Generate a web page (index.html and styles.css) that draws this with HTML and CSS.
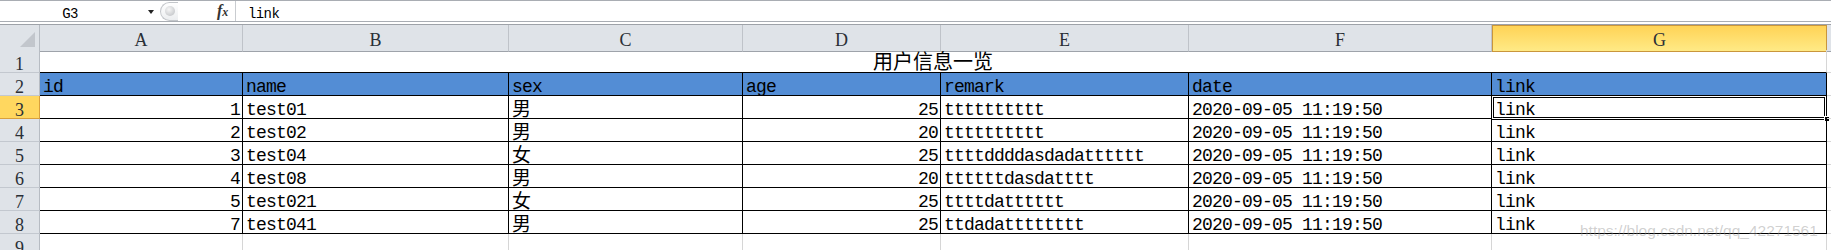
FILE: index.html
```html
<!DOCTYPE html>
<html lang="zh-CN">
<head>
<meta charset="utf-8">
<title>用户信息一览</title>
<link rel="stylesheet" href="styles.css">
</head>
<body>
<div class="app">
  <div class="fbar">
    <div class="namebox"><span class="ref">G3</span><span class="caret"></span></div>
    <div class="splitter"><span class="knob"></span></div>
    <div class="fx"><i class="f">f</i><i class="x">x</i></div>
    <div class="formula">link</div>
  </div>
  <div class="gap"></div>
  <div class="sheet">
    <div class="row hdr">
      <div class="corner"><svg width="40" height="24" viewBox="0 0 40 24"><polygon points="35,7 35,22 20,22" fill="#c2c6cc"/></svg></div>
      <div class="ch">A</div><div class="ch">B</div><div class="ch">C</div><div class="ch">D</div><div class="ch">E</div><div class="ch">F</div><div class="ch active">G</div><div class="ch filler"></div>
    </div>
    <div class="row">
      <div class="rh">1</div>
      <div class="c title"><span class="cjk">用户信息一览</span></div>
      <div class="c fill"></div>
    </div>
    <div class="row">
      <div class="rh">2</div>
      <div class="c t blue">id</div><div class="c t blue">name</div><div class="c t blue">sex</div><div class="c t blue">age</div><div class="c t blue">remark</div><div class="c t blue">date</div><div class="c t blue">link</div>
      <div class="c fill"></div>
    </div>
    <div class="row">
      <div class="rh active">3</div>
      <div class="c t num">1</div><div class="c t">test01</div><div class="c t"><span class="cjk">男</span></div><div class="c t num">25</div><div class="c t">tttttttttt</div><div class="c t">2020-09-05 11:19:50</div><div class="c t selcell">link<span class="sel"></span><span class="handle"></span></div>
      <div class="c fill"></div>
    </div>
    <div class="row">
      <div class="rh">4</div>
      <div class="c t num">2</div><div class="c t">test02</div><div class="c t"><span class="cjk">男</span></div><div class="c t num">20</div><div class="c t">tttttttttt</div><div class="c t">2020-09-05 11:19:50</div><div class="c t">link</div>
      <div class="c fill"></div>
    </div>
    <div class="row">
      <div class="rh">5</div>
      <div class="c t num">3</div><div class="c t">test04</div><div class="c t"><span class="cjk">女</span></div><div class="c t num">25</div><div class="c t">ttttddddasdadatttttt</div><div class="c t">2020-09-05 11:19:50</div><div class="c t">link</div>
      <div class="c fill"></div>
    </div>
    <div class="row">
      <div class="rh">6</div>
      <div class="c t num">4</div><div class="c t">test08</div><div class="c t"><span class="cjk">男</span></div><div class="c t num">20</div><div class="c t">ttttttdasdatttt</div><div class="c t">2020-09-05 11:19:50</div><div class="c t">link</div>
      <div class="c fill"></div>
    </div>
    <div class="row">
      <div class="rh">7</div>
      <div class="c t num">5</div><div class="c t">test021</div><div class="c t"><span class="cjk">女</span></div><div class="c t num">25</div><div class="c t">ttttdatttttt</div><div class="c t">2020-09-05 11:19:50</div><div class="c t">link</div>
      <div class="c fill"></div>
    </div>
    <div class="row">
      <div class="rh">8</div>
      <div class="c t num">7</div><div class="c t">test041</div><div class="c t"><span class="cjk">男</span></div><div class="c t num">25</div><div class="c t">ttdadatttttttt</div><div class="c t">2020-09-05 11:19:50</div><div class="c t">link</div>
      <div class="c fill"></div>
    </div>
    <div class="row">
      <div class="rh">9</div>
      <div class="c"></div><div class="c"></div><div class="c"></div><div class="c"></div><div class="c"></div><div class="c"></div><div class="c"></div>
      <div class="c fill"></div>
    </div>
  </div>
  <div class="watermark">https://blog.csdn.net/qq_42271561</div>
</div>
</body>
</html>
```
FILE: styles.css
```css
* { box-sizing: border-box; }
html, body { margin: 0; padding: 0; background: #fff; }
.app {
  position: relative;
  width: 1831px;
  height: 250px;
  overflow: hidden;
  color: #000;
}

/* formula bar */
.fbar {
  display: flex;
  align-items: flex-end;
  height: 22px;
  border-top: 1px solid #a9adb3;
  border-bottom: 1px solid #a9adb3;
  font-family: "Liberation Mono", monospace;
  font-size: 14px;
  letter-spacing: -0.6px;
  background: #fff;
}
.namebox {
  width: 158px;
  height: 100%;
  display: flex;
  align-items: flex-end;
}
.ref {
  width: 140px;
  text-align: center;
  line-height: 13px;
}
.caret {
  align-self: center;
  margin-left: 8px;
  width: 0;
  height: 0;
  border-left: 3.5px solid transparent;
  border-right: 3.5px solid transparent;
  border-top: 4px solid #222;
  margin-top: 2px;
}
.splitter {
  align-self: center;
  margin-left: 2px;
  width: 18px;
  height: 19px;
  border: 1px solid #c3c6ca;
  border-right: none;
  border-radius: 10px 0 0 10px;
  background: linear-gradient(#ffffff, #eceef0);
  display: flex;
  align-items: center;
  justify-content: center;
}
.knob {
  width: 10px;
  height: 10px;
  border-radius: 50%;
  background: radial-gradient(circle at 40% 35%, #f6f6f6, #b9bcc0);
}
.fx {
  align-self: stretch;
  margin-left: 39px;
  width: 19px;
  border-right: 1px solid #c9ccd0;
  display: flex;
  align-items: center;
  font-family: "Liberation Serif", serif;
  font-size: 16px;
  font-weight: bold;
  letter-spacing: 0;
  color: #333;
}
.fx .f { font-style: italic; }
.fx .x { font-style: italic; font-size: 12px; margin-top: 3px; }
.formula {
  flex: 1;
  padding-left: 12px;
  line-height: 13px;
}
.gap { height: 2px; }

/* sheet */
.sheet {
  border-top: 1px solid #9ea2a8;
  --cols: 40px 203px 266px 234px 198px 248px 303px 335px 1fr;
}
.row {
  display: grid;
  grid-template-columns: var(--cols);
  height: 23px;
}
.row.hdr { height: 25px; }

.corner {
  background: #dfe3e8;
  border-right: 1px solid #b7bcc3;
  border-bottom: 1px solid #9ea3aa;
}
.corner svg { display: block; }
.ch {
  background: #dfe3e8;
  border-right: 1px solid #bfc3c9;
  border-bottom: 1px solid #9ea3aa;
  display: flex;
  align-items: center;
  justify-content: center;
  padding-top: 5px;
  font-family: "Liberation Serif", serif;
  font-size: 18px;
  color: #2a2f36;
}
.ch.active {
  background: linear-gradient(#ffd356, #ffea86);
  border: 1px solid #c9963c;
  padding-top: 4px;
}
.ch.filler { border-right: none; }

.rh {
  background: #dfe3e8;
  border-right: 1px solid #b7bcc3;
  border-bottom: 1px solid #c3c8cf;
  display: flex;
  align-items: flex-end;
  justify-content: center;
  font-family: "Liberation Serif", serif;
  font-size: 18px;
  line-height: 15px;
  color: #2a2f36;
  overflow: hidden;
}
.rh.active {
  background: #ffd75f;
  border-right-color: #d9a03c;
  border-bottom-color: #d9a03c;
}

.c {
  position: relative;
  min-width: 0;
  display: flex;
  align-items: flex-end;
  padding: 0 3px 0 3px;
  white-space: nowrap;
  border-right: 1px solid #d6d6d6;
  border-bottom: 1px solid #d6d6d6;
  font-family: "Liberation Mono", "Noto Sans CJK SC", monospace;
  font-size: 18px;
  letter-spacing: -0.8px;
  line-height: 15px;
}
.c.t { border-color: #000; }
.c.blue { background: #538dd5; }
.c.num { justify-content: flex-end; padding-right: 2px; }
.c.fill { border-right: none; }
.c.title {
  grid-column: span 7;
  justify-content: center;
  border-bottom-color: #000;
}
.cjk {
  font-family: "Noto Sans CJK SC", sans-serif;
  font-size: 19px;
  letter-spacing: 0;
  line-height: 21px;
}
.title .cjk { font-size: 20px; line-height: 22px; }

/* selected cell */
.selcell { overflow: visible; }
.sel {
  position: absolute;
  left: -1px;
  top: -1px;
  right: -1px;
  bottom: -2px;
  border: 1px solid #000;
  box-shadow: inset 0 0 0 1px #fff, inset 0 0 0 2px #000;
  pointer-events: none;
}
.handle {
  position: absolute;
  right: -4px;
  bottom: -4px;
  width: 6px;
  height: 6px;
  background: #000;
  border: 1px solid #fff;
}

.watermark {
  position: absolute;
  left: 1580px;
  top: 222px;
  font-family: "Liberation Sans", sans-serif;
  font-size: 15.5px;
  color: rgba(150, 150, 150, 0.45);
  white-space: nowrap;
}
```
